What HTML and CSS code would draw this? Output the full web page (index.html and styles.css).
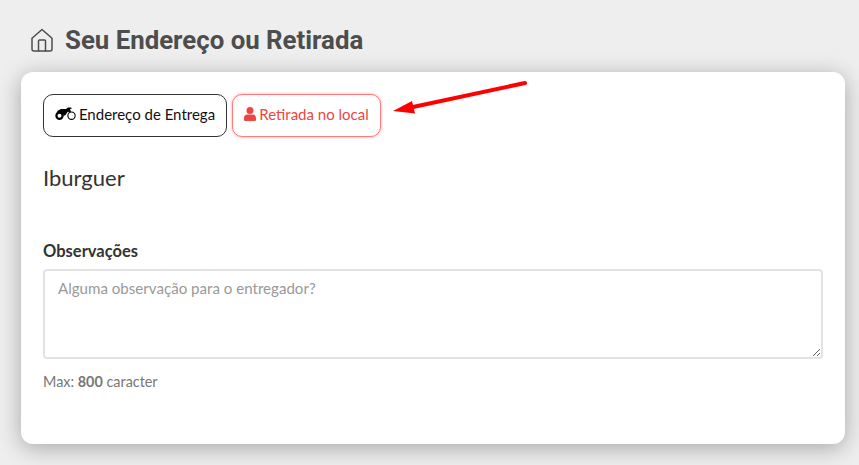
FILE: index.html
```html
<!DOCTYPE html>
<html lang="pt">
<head>
<meta charset="utf-8">
<title>Seu Endereço ou Retirada</title>
<link rel="stylesheet" href="styles.css">
</head>
<body>
<header class="page-head">
  <svg class="home-icon" width="24" height="24" viewBox="0 0 24 24" fill="none" stroke="#4d4d4d" stroke-width="1.5" stroke-linejoin="round" stroke-linecap="round">
    <path d="M2 10.200 12 1.500l10 8.700V21a2 2 0 0 1-2 2H4a2 2 0 0 1-2-2z"/>
    <path d="M8.500 23V13a1 1 0 0 1 1-1h5a1 1 0 0 1 1 1v10"/>
  </svg>
  <h1 class="page-title">Seu Endereço ou Retirada</h1>
</header>
<main class="card">
  <div class="tabs">
    <button class="tab" type="button">
      <svg class="tab-icon" width="21" height="14" viewBox="0 0 21 14" fill="#000">
        <path d="M6 2h5l2-1.500h3l1 1-2 .5 1 2.500-2 1-1-1-3 4H7.500L5.500 6 1.500 5.500 3 3.500z"/>
        <path fill-rule="evenodd" d="M4.500 4.500a4.200 4.200 0 1 1 0 8.400 4.200 4.200 0 0 1 0-8.400zm0 2.200a2 2 0 1 0 0 4 2 2 0 0 0 0-4zM16.500 4.500a4.200 4.200 0 1 1 0 8.400 4.200 4.200 0 0 1 0-8.400zm0 1.100a3.100 3.100 0 1 0 0 6.200 3.100 3.100 0 0 0 0-6.200z"/>
      </svg>
      Endereço de Entrega
    </button>
    <button class="tab tab-active" type="button">
      <svg class="tab-icon" width="12" height="14" viewBox="0 0 12 14" fill="#ef4444">
        <circle cx="6" cy="3.500" r="3.500"/>
        <path d="M3.500 7.500h5A3.500 3.500 0 0 1 12 11v1.700a1.300 1.300 0 0 1-1.300 1.300H1.300A1.300 1.300 0 0 1 0 12.700V11a3.500 3.500 0 0 1 3.500-3.500z"/>
      </svg>
      Retirada no local
    </button>
  </div>
  <h2 class="store">Iburguer</h2>
  <label class="label" for="obs">Observações</label>
  <textarea class="notes" id="obs" placeholder="Alguma observação para o entregador?"></textarea>
  <p class="hint">Max: <strong>800</strong> caracter</p>
  <svg class="arrow" width="140" height="40" viewBox="0 0 140 40" fill="none">
    <path d="M134 6 22 30" stroke="#ff0000" stroke-width="4" stroke-linecap="round"/>
    <path d="M2 34 21 24l3 12.500z" fill="#ff0000"/>
  </svg>
</main>
</body>
</html>
```
FILE: styles.css
```css
* { box-sizing: border-box; }
html, body { height: 100%; }
body {
  margin: 0;
  padding: 24px 14px 21px 21px;
  background: #eeeeee;
  font-family: "Lato", "Noto Sans", sans-serif;
  overflow: hidden;
}
.page-head {
  display: flex;
  align-items: center;
  gap: 11px;
  height: 32px;
  margin: 0 0 16px 9px;
}
.home-icon { flex: none; }
.page-title {
  margin: 0;
  font: 700 25.800px/32px "Roboto", sans-serif;
  color: #4d4d4d;
}
.card {
  position: relative;
  height: 372px;
  padding: 22px 22px 0;
  background: #fff;
  border-radius: 12px;
  box-shadow: 0 4px 22px rgba(0, 0, 0, 0.3);
}
.tabs { display: flex; gap: 5px; }
.tab {
  display: flex;
  align-items: center;
  justify-content: center;
  gap: 3px;
  height: 43px;
  padding: 0 0 4px;
  width: 184px;
  border: 1px solid #333;
  border-radius: 10px;
  background: #fff;
  color: #111;
  font: 400 15px "Lato", "Noto Sans", sans-serif;
}
.tab-active {
  width: 149px;
  border-color: #ff7b7b;
  box-shadow: 0 0 3px rgba(255, 100, 100, 0.6);
  color: #ef4444;
}
.tab-icon { flex: none; }
.store {
  margin: 28px 0 0;
  font: 400 22px/26px "Lato", "Noto Sans", sans-serif;
  color: #333;
}
.label {
  display: block;
  margin-top: 50px;
  font: 700 16.500px/20px "Lato", "Noto Sans", sans-serif;
  color: #333;
}
.notes {
  display: block;
  width: 780px;
  height: 90px;
  margin-top: 8px;
  padding: 7px 13px;
  border: 2px solid #e3e3e3;
  border-radius: 4px;
  outline: none;
  font: 400 15.100px/20px "Lato", "Noto Sans", sans-serif;
  color: #333;
}
.notes::placeholder { color: #999; opacity: 1; }
.hint {
  margin: 14px 0 0;
  font-size: 14.400px;
  line-height: 18px;
  color: #777;
}
.hint strong { font-weight: 700; }
.arrow {
  position: absolute;
  left: 370px;
  top: 5px;
}
```
